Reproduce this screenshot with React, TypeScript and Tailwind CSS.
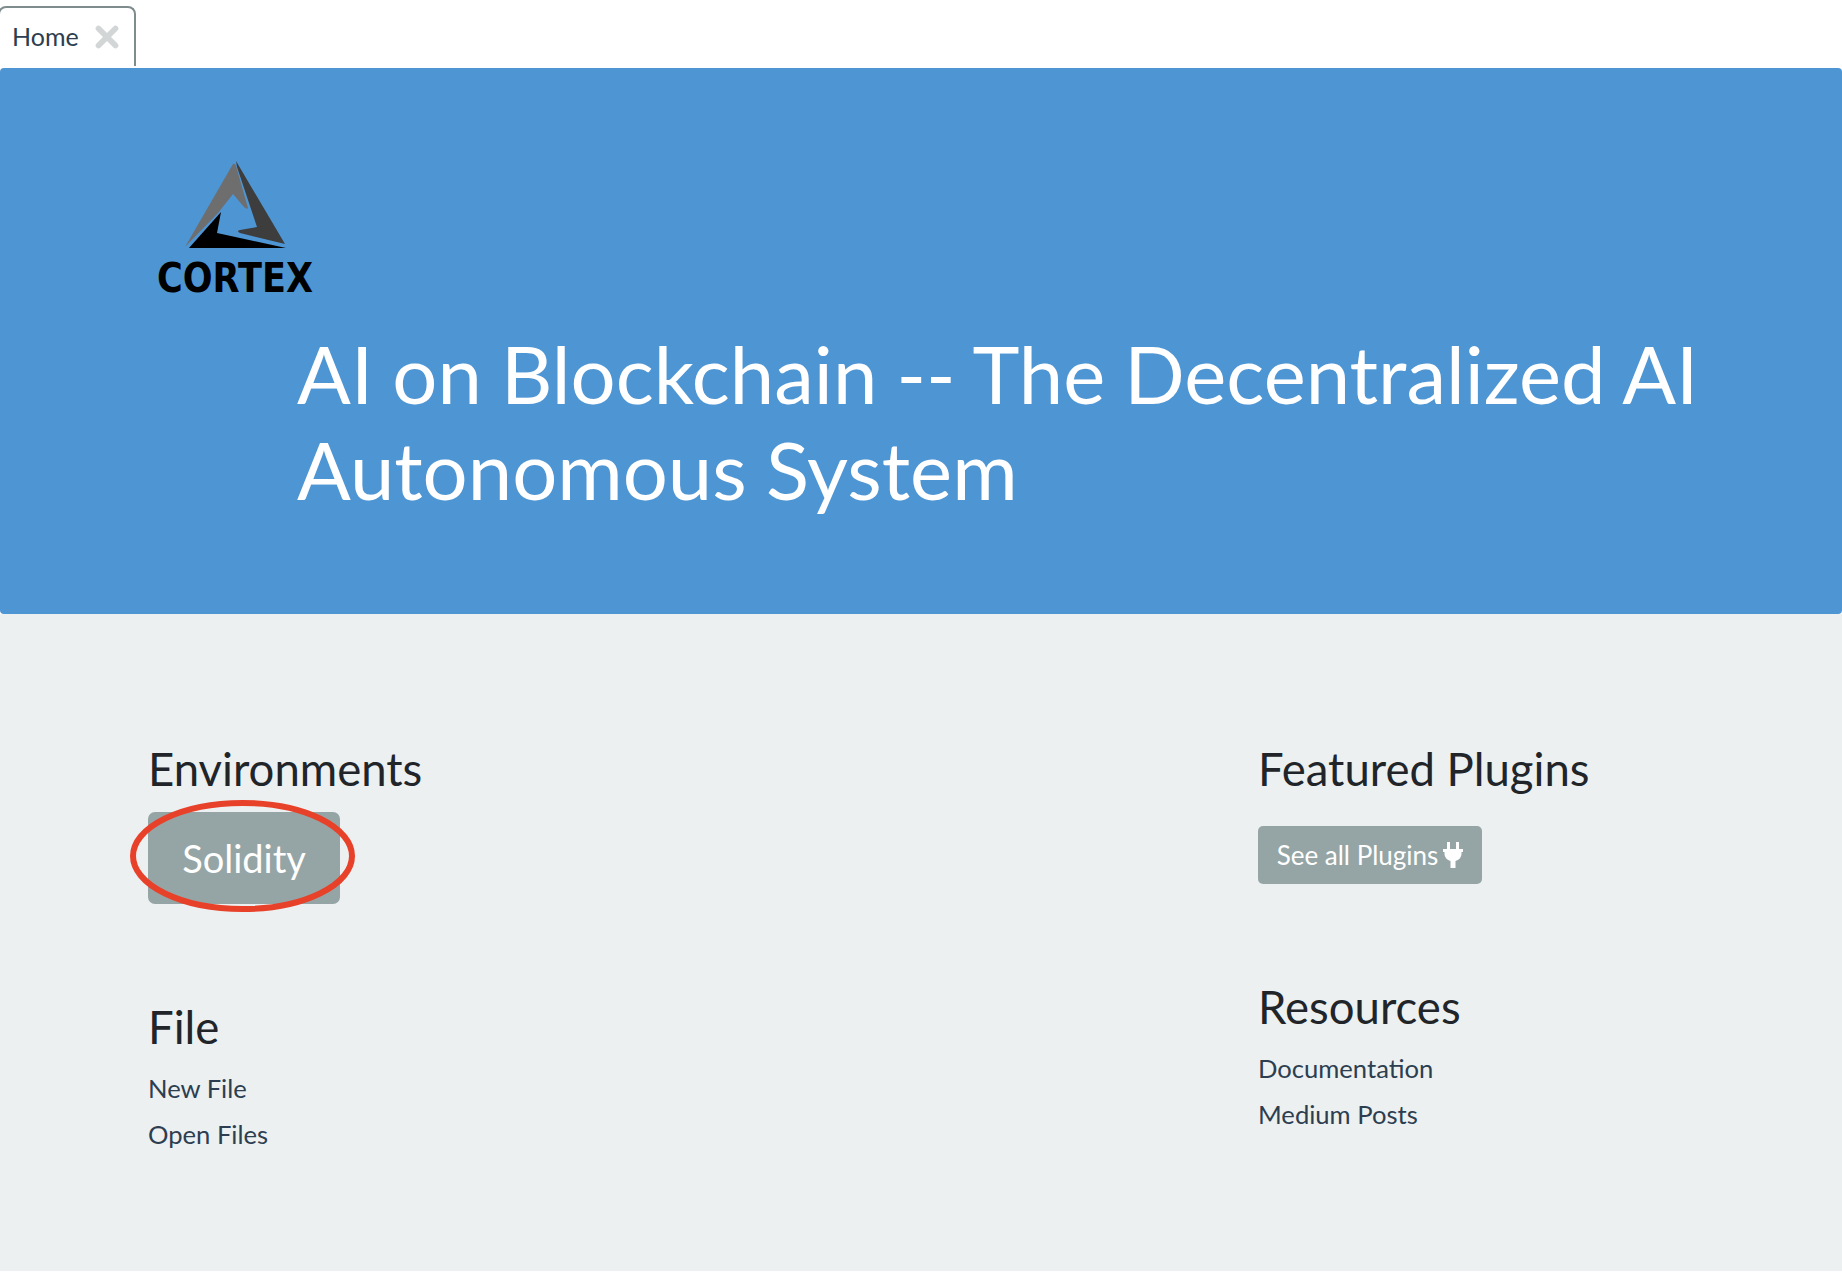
import { X } from "lucide-react";

function CortexLogo() {
  return (
    <div className="w-[156px] h-[130px]">
      <svg className="overflow-visible" width="156" height="130" viewBox="0 0 156 130">
        {/* grey left face */}
        <path d="M28 86 L76 3 Q78 2 79 5 L91 47 Q90 49 87 46 L76 33 L61 52 Z" fill="#6e6e6e" />
        {/* dark right face */}
        <path d="M79 0 L128 83 L83 72 Q79 70 83 69 L100 66 L80 6 Z" fill="#3d3d3d" />
        {/* black base */}
        <path d="M32 87 L64 51 L60 72 L129 87 Z" fill="#000000" />
        <text
          x="0"
          y="131"
          textLength="156"
          lengthAdjust="spacingAndGlyphs"
          fontFamily="'DejaVu Sans', sans-serif"
          fontWeight="700"
          fontSize="40"
          fill="#000000"
        >
          CORTEX
        </text>
      </svg>
    </div>
  );
}

function PlugIcon() {
  return (
    <svg width="20" height="26" viewBox="0 0 20 26" fill="currentColor">
      <path d="M4 0 h3 v7 h6 v-7 h3 v7 h4 v3 h-1.500 v2 a7 7 0 0 1 -6 6.900 v7.100 h-5 v-7.100 a7 7 0 0 1 -6 -6.900 v-2 h-1.500 v-3 h4 Z" />
    </svg>
  );
}

export default function App() {
  return (
    <div className="min-h-[1272px] bg-white flex flex-col font-['Lato',sans-serif]">
      {/* Tabs */}
      <div className="h-[68px] pt-[6px] shrink-0">
        <div className="h-[60px] w-[138px] -ml-[2px] border-2 border-b-0 border-[#7f8c8d] rounded-t-[8px] flex items-center pl-[12px] pb-[1px] bg-white">
          <span className="text-[25px] text-[#2c3e50]">Home</span>
          <X className="ml-[11px] w-[34px] h-[34px] text-[#d2d6d6]" strokeWidth={4} />
        </div>
      </div>

      {/* Hero */}
      <div className="h-[546px] bg-[#4e95d4] rounded-[4px] pt-[93px] pl-[157px] shrink-0">
        <CortexLogo />
        <h1 className="ml-[140px] mt-[34px] text-[79.600px] leading-[96px] [word-spacing:-1.200px] font-normal text-white w-[1500px]">
          AI on Blockchain -- The Decentralized AI Autonomous System
        </h1>
      </div>

      {/* Body */}
      <div className="flex-1 bg-[#ecf0f1] pl-[148px] pt-[128px] mb-[1px] flex text-[#212529]">
        <div className="w-[1110px]">
          <h3 className="text-[45.500px] leading-[53px]">Environments</h3>
          <div className="relative w-[192px] mt-[17px]">
            <button className="w-[192px] h-[92px] bg-[#95a5a6] rounded-[7px] text-white text-[38px]">
              Solidity
            </button>
            <svg className="absolute -left-[18px] -top-[12px]" width="225" height="112" viewBox="0 0 225 112">
              <ellipse cx="112.500" cy="56" rx="109.500" ry="53" fill="none" stroke="#e8412a" strokeWidth="6" />
            </svg>
          </div>
          <h3 className="text-[45.500px] leading-[53px] mt-[96px]">File</h3>
          <div className="mt-[20px] text-[25.600px] leading-[30px] text-[#2c3e50] flex flex-col gap-[16px]">
            <a>New File</a>
            <a>Open Files</a>
          </div>
        </div>

        <div>
          <h3 className="text-[45.500px] leading-[53px]">Featured Plugins</h3>
          <button className="mt-[31px] h-[58px] w-[224px] bg-[#95a5a6] rounded-[5px] text-white text-[26px] flex items-center justify-center gap-[5px]">
            See all Plugins
            <PlugIcon />
          </button>
          <h3 className="text-[45.500px] leading-[53px] mt-[96px]">Resources</h3>
          <div className="mt-[20px] text-[25.600px] leading-[30px] text-[#2c3e50] flex flex-col gap-[16px]">
            <a>Documentation</a>
            <a>Medium Posts</a>
          </div>
        </div>
      </div>
    </div>
  );
}
